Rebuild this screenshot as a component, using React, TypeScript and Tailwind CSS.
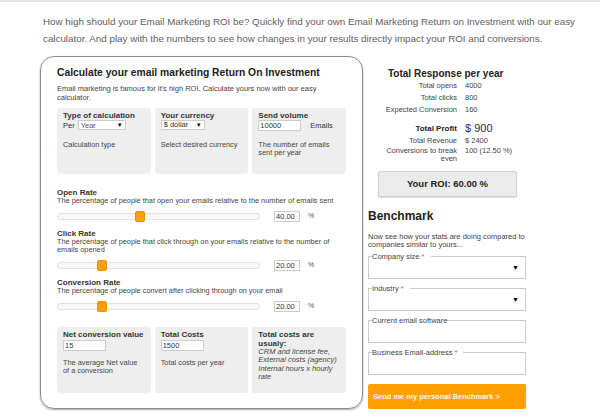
import React from "react";

const FONT = { fontFamily: '"Liberation Sans", Arial, sans-serif' };

function Slider({ label, desc, value }: { label: string; desc: React.ReactNode; value: number }) {
  // thumb sits inside the track, so it travels width - thumb width
  const left = (value / 100) * (203 - 10);
  return (
    <div>
      <div className="text-[8px] font-bold leading-[9px] text-[#333]">{label}</div>
      <div className="text-[7.35px] leading-[8px] text-[#444]">{desc}</div>
      <div className="mt-[6px] flex items-center">
        <div className="relative h-[7px] w-[203px] rounded-[3px] border border-[#e2e2e2] bg-[#f7f7f7]">
          <div
            className="absolute top-[-3px] h-[11px] w-[10px] rounded-[2px] border border-[#e69500] bg-[#ffa000]"
            style={{ left }}
          />
        </div>
        <div className="ml-[14px] h-[11px] w-[26px] border border-[#ccc] bg-white pl-[1px] text-[7.5px] leading-[9px] text-[#333]">
          {value.toFixed(2)}
        </div>
        <span className="ml-[8px] text-[7px] text-[#555]">%</span>
      </div>
    </div>
  );
}

function Box({ children }: { children: React.ReactNode }) {
  return <div className="h-[66px] rounded-[3px] bg-[#eeeeee] px-[6px] pt-[3px]">{children}</div>;
}

function BoxTitle({ children }: { children: React.ReactNode }) {
  return <div className="text-[8px] font-bold leading-[9px] text-[#333]">{children}</div>;
}

function Field({ label, required, select }: { label: string; required?: boolean; select?: boolean }) {
  return (
    <fieldset className="h-[27px] border border-[#c5ccd2] px-[3px]">
      <legend className="px-0 text-[7.5px] leading-[9px] text-[#444]">
        {label}
        {required && <span className="text-[#e05050]"> *</span>}
        {required && <span className="inline-block w-[6px]" />}
      </legend>
      {select && (
        <div className="flex justify-end pr-[3px] pt-[3px] text-[7px] leading-[8px] text-black">▼</div>
      )}
    </fieldset>
  );
}

export default function App() {
  return (
    <div style={FONT} className="h-[420px] w-[600px] overflow-hidden border-t-2 border-[#e3e3e3] bg-white">
      <p className="ml-[43px] mt-[11px] w-[540px] text-[9.8px] leading-[17px] text-[#5e5e5e]">
        How high should your Email Marketing ROI be? Quickly find your own Email Marketing Return on Investment with our easy
        <br />
        calculator. And play with the numbers to see how changes in your results directly impact your ROI and conversions.
      </p>

      <div className="ml-[40px] mt-[9px] flex items-start gap-[5px]">
        {/* calculator card */}
        <div className="h-[353px] w-[323px] rounded-[14px] border border-[#8c8c8c] px-[16px] pt-[9px] shadow-[0_1px_2px_rgba(0,0,0,0.35)]">
          <h2 className="whitespace-nowrap text-[10.3px] font-bold leading-[13px] text-[#222]">
            Calculate your email marketing Return On Investment
          </h2>
          <p className="mt-[5px] w-[265px] text-[7.5px] leading-[9px] text-[#444]">
            Email marketing is famous for it's high ROI. Calculate yours now with our easy calculator.
          </p>

          <div className="mt-[6px] grid grid-cols-3 gap-[4px]">
            <Box>
              <BoxTitle>Type of calculation</BoxTitle>
              <div className="flex items-center text-[7.5px] leading-[9px] text-[#333]">
                Per
                <div className="ml-[3px] flex h-[10px] w-[48px] items-center justify-between border border-[#ccc] bg-white px-[2px] text-[#555]">
                  <span>Year</span>
                  <span className="text-[6px] text-black">▼</span>
                </div>
              </div>
              <div className="mt-[11px] text-[7.35px] leading-[8px] text-[#444]">Calculation type</div>
            </Box>
            <Box>
              <BoxTitle>Your currency</BoxTitle>
              <div className="flex h-[10px] w-[44px] items-center justify-between border border-[#ccc] bg-white px-[2px] text-[7.5px] text-[#333]">
                <span>$ dollar</span>
                <span className="text-[6px] text-black">▼</span>
              </div>
              <div className="mt-[11px] text-[7.35px] leading-[8px] text-[#444]">Select desired currency</div>
            </Box>
            <Box>
              <BoxTitle>Send volume</BoxTitle>
              <div className="flex items-center text-[7.5px] leading-[9px] text-[#333]">
                <div className="h-[11px] w-[43px] border border-[#ccc] bg-white pl-[1px] text-[#333]">10000</div>
                <span className="ml-[9px]">Emails</span>
              </div>
              <div className="mt-[10px] text-[7.35px] leading-[8px] text-[#444]">
                The number of emails
                <br />
                sent per year
              </div>
            </Box>
          </div>

          <div className="mt-[14px] flex flex-col gap-[7px]">
            <Slider
              label="Open Rate"
              desc="The percentage of people that open your emails relative to the number of emails sent"
              value={40}
            />
            <Slider
              label="Click Rate"
              desc={
                <>
                  The percentage of people that click through on your emails relative to the number of
                  <br />
                  emails opened
                </>
              }
              value={20}
            />
            <Slider
              label="Conversion Rate"
              desc="The percentage of people convert after clicking through on your email"
              value={20}
            />
          </div>

          <div className="mt-[15px] grid grid-cols-3 gap-[4px]">
            <Box>
              <BoxTitle>Net conversion value</BoxTitle>
              <div className="mt-[1px] h-[11px] w-[43px] border border-[#ccc] bg-white pl-[1px] text-[7.5px] leading-[9px] text-[#333]">
                15
              </div>
              <div className="mt-[8px] text-[7.35px] leading-[8px] text-[#444]">
                The average Net value
                <br />
                of a conversion
              </div>
            </Box>
            <Box>
              <BoxTitle>Total Costs</BoxTitle>
              <div className="mt-[1px] h-[11px] w-[43px] border border-[#ccc] bg-white pl-[1px] text-[7.5px] leading-[9px] text-[#333]">
                1500
              </div>
              <div className="mt-[8px] text-[7.35px] leading-[8px] text-[#444]">Total costs per year</div>
            </Box>
            <Box>
              <BoxTitle>
                Total costs are
                <br />
                usualy:
              </BoxTitle>
              <div className="text-[7.5px] italic leading-[8.3px] text-[#444]">
                CRM and license fee,
                <br />
                External costs (agency)
                <br />
                Internal hours x hourly
                <br />
                rate
              </div>
            </Box>
          </div>
        </div>

        {/* results + benchmark */}
        <div className="w-[158px]">
          <div className="pt-[12px] pl-[20px] text-[10px] font-bold leading-[12px] text-[#222]">Total Response per year</div>
          <div className="grid grid-cols-[89px_1fr] gap-x-[8px] text-[7.5px] leading-[12px] text-[#444]">
            <span className="text-right">Total opens</span>
            <span>4000</span>
            <span className="text-right">Total clicks</span>
            <span>800</span>
            <span className="text-right">Expected Conversion</span>
            <span>160</span>
          </div>
          <div className="mt-[6px] grid grid-cols-[89px_1fr] gap-x-[8px] text-[7.5px] text-[#444]">
            <span className="text-right text-[8px] font-bold leading-[13px] text-[#222]">Total Profit</span>
            <span className="text-[11px] leading-[13px] text-[#333]">$ 900</span>
            <span className="text-right leading-[12px]">Total Revenue</span>
            <span className="leading-[12px]">$ 2400</span>
            <span className="text-right leading-[8px]">
              Conversions to break
              <br />
              even
            </span>
            <span className="leading-[8px]">100 (12.50 %)</span>
          </div>

          <div className="ml-[10px] mt-[8px] flex h-[26px] w-[139px] items-center justify-center rounded-[2px] border border-[#d0d0d0] bg-[#ececec] text-[9.5px] font-bold text-[#222] shadow-[0_1px_1px_rgba(0,0,0,0.15)]">
            Your ROI: 60.00 %
          </div>

          <div className="mt-[12px] text-[12px] font-bold leading-[14px] text-[#222]">Benchmark</div>
          <p className="mt-[10px] text-[7.5px] leading-[8px] text-[#444]">
            Now see how your stats are doing compared to companies similar to yours...
          </p>
          <div className="mt-[3px] flex flex-col gap-[5px]">
            <Field label="Company size" required select />
            <Field label="Industry" required select />
            <Field label="Current email software" />
            <Field label="Business Email-address" required />
          </div>
          <div className="mt-[9px] flex h-[25px] items-center rounded-[2px] bg-[#ffa000] pl-[5px] text-[7.5px] font-bold text-[#fff8e8]">
            Send me my personal Benchmark &gt;
          </div>
        </div>
      </div>
    </div>
  );
}
